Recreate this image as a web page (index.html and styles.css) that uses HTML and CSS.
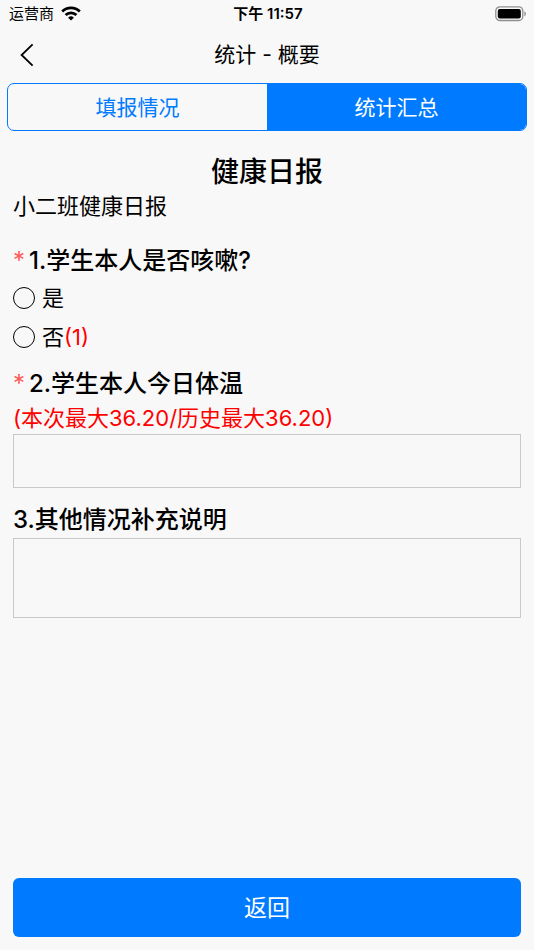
FILE: index.html
```html
<!DOCTYPE html>
<html lang="zh-CN">
<head>
    <meta charset="UTF-8">
    <meta name="viewport" content="width=device-width, initial-scale=1.0">
    <title>统计 - 概要</title>
    <link rel="stylesheet" href="styles.css">
</head>
<body>
    <div class="status-bar">
        <div class="carrier">
            <span>运营商</span>
            <svg width="20" height="15" viewBox="0 0 20 15" aria-hidden="true">
                <g fill="none" stroke="#000" stroke-width="2.8">
                    <path d="M1.2 5.4a12.6 12.6 0 0 1 17.6 0"/>
                    <path d="M4.6 9a7.8 7.8 0 0 1 10.8 0"/>
                </g>
                <path d="M10 14.6l-2.9-2.9a4.1 4.1 0 0 1 5.8 0z"/>
            </svg>
        </div>
        <div class="time">下午 11:57</div>
        <div class="battery">
            <svg width="32" height="16" viewBox="0 0 32 16" aria-hidden="true">
                <rect x="0.8" y="0.9" width="27" height="13.6" rx="4" fill="none" stroke="#8e8e8e" stroke-width="1.3"/>
                <rect x="2.8" y="2.9" width="23" height="9.6" rx="2"/>
                <path d="M29.4 5.2c2 .8 2 4.2 0 5z" fill="#8e8e8e"/>
            </svg>
        </div>
    </div>

    <header class="nav-bar">
        <button type="button" class="back-button" aria-label="返回上一页">
            <svg width="14" height="24" viewBox="0 0 14 24" aria-hidden="true">
                <path d="M12.6 1.4L1.6 12l11 10.6" fill="none" stroke="#000" stroke-width="1.8"/>
            </svg>
        </button>
        <h1>统计 - 概要</h1>
    </header>

    <nav class="segment">
        <button type="button">填报情况</button>
        <button type="button" class="active">统计汇总</button>
    </nav>

    <main>
        <h2 class="form-title">健康日报</h2>
        <p class="form-desc">小二班健康日报</p>

        <fieldset class="question">
            <legend><span class="required">*</span>1.学生本人是否咳嗽?</legend>
            <label class="option"><input type="radio" name="cough" value="yes"><span>是</span></label>
            <label class="option"><input type="radio" name="cough" value="no"><span>否<span class="count">(1)</span></span></label>
        </fieldset>

        <div class="question">
            <label class="question-title" for="temperature"><span class="required">*</span>2.学生本人今日体温</label>
            <p class="hint">(本次最大36.20/历史最大36.20)</p>
            <input type="text" class="text-box" id="temperature">
        </div>

        <div class="question">
            <label class="question-title" for="remark">3.其他情况补充说明</label>
            <textarea class="text-box remark" id="remark"></textarea>
        </div>
    </main>

    <footer>
        <button type="button" class="return-button">返回</button>
    </footer>
</body>
</html>
```
FILE: styles.css
```css
* {
    box-sizing: border-box;
}

body {
    font-family: Inter, "Noto Sans CJK SC", sans-serif;
    font-size: 22px;
    line-height: 32px;
    margin: 0;
    min-height: 100vh;
    display: flex;
    flex-direction: column;
    background-color: #f8f8f8;
    color: #000;
}

button,
input,
textarea {
    font-family: inherit;
    font-size: inherit;
    color: inherit;
    margin: 0;
}

button {
    cursor: pointer;
}

h1,
h2,
p {
    margin: 0;
}

.status-bar {
    display: grid;
    grid-template-columns: 1fr auto 1fr;
    align-items: center;
    height: 27px;
    padding: 0 7px 0 9px;
    font-size: 15px;
    line-height: 27px;
}

.carrier {
    display: flex;
    align-items: center;
    gap: 7px;
}

.time {
    font-weight: 600;
}

.battery {
    display: flex;
    justify-content: flex-end;
}

.nav-bar {
    display: grid;
    grid-template-columns: 54px 1fr 54px;
    align-items: center;
    height: 55px;
}

.nav-bar h1 {
    font-size: 21px;
    font-weight: normal;
    text-align: center;
}

.back-button {
    display: flex;
    padding: 10px 20px;
    border: none;
    background: none;
}

.segment {
    display: flex;
    margin: 1px 7px 0;
    border: 1px solid #007aff;
    border-radius: 7px;
    overflow: hidden;
}

.segment button {
    flex: 1;
    height: 46px;
    padding: 0 0 3px;
    border: none;
    background: none;
    color: #007aff;
    font-size: 21px;
}

.segment .active {
    background-color: #007aff;
    color: #fff;
}

main {
    flex: 1;
    padding: 23px 13px;
}

.form-title {
    font-size: 28px;
    font-weight: 500;
    line-height: 36px;
    text-align: center;
}

.form-desc {
    margin-bottom: 23px;
}

.question {
    margin: 0 0 16px;
    padding: 0;
    border: none;
}

fieldset.question {
    margin-bottom: 12px;
}

.question legend,
.question-title {
    display: block;
    margin-bottom: 2px;
    padding: 0;
    font-size: 24px;
    font-weight: 500;
}

.question legend {
    margin-bottom: 1px;
}

.required {
    margin-right: 4px;
    color: #ff5b5b;
    font-weight: normal;
}

.option {
    display: flex;
    align-items: center;
    gap: 7px;
    height: 39px;
}

.option input {
    appearance: none;
    width: 22px;
    height: 22px;
    border: 1px solid #000;
    border-radius: 50%;
}

.option input:checked {
    border: 6px solid #007aff;
}

.count,
.hint {
    color: #ff0000;
}

.text-box {
    display: block;
    width: 100%;
    height: 54px;
    padding: 8px;
    border: 1px solid #c8c9cc;
    border-radius: 0;
    background-color: transparent;
}

.remark {
    height: 80px;
    resize: none;
}

footer {
    padding: 0 13px 13px;
}

.return-button {
    width: 100%;
    height: 59px;
    padding: 0 0 3px;
    border: none;
    border-radius: 6px;
    background-color: #007aff;
    color: #fff;
    font-size: 23px;
}
```
